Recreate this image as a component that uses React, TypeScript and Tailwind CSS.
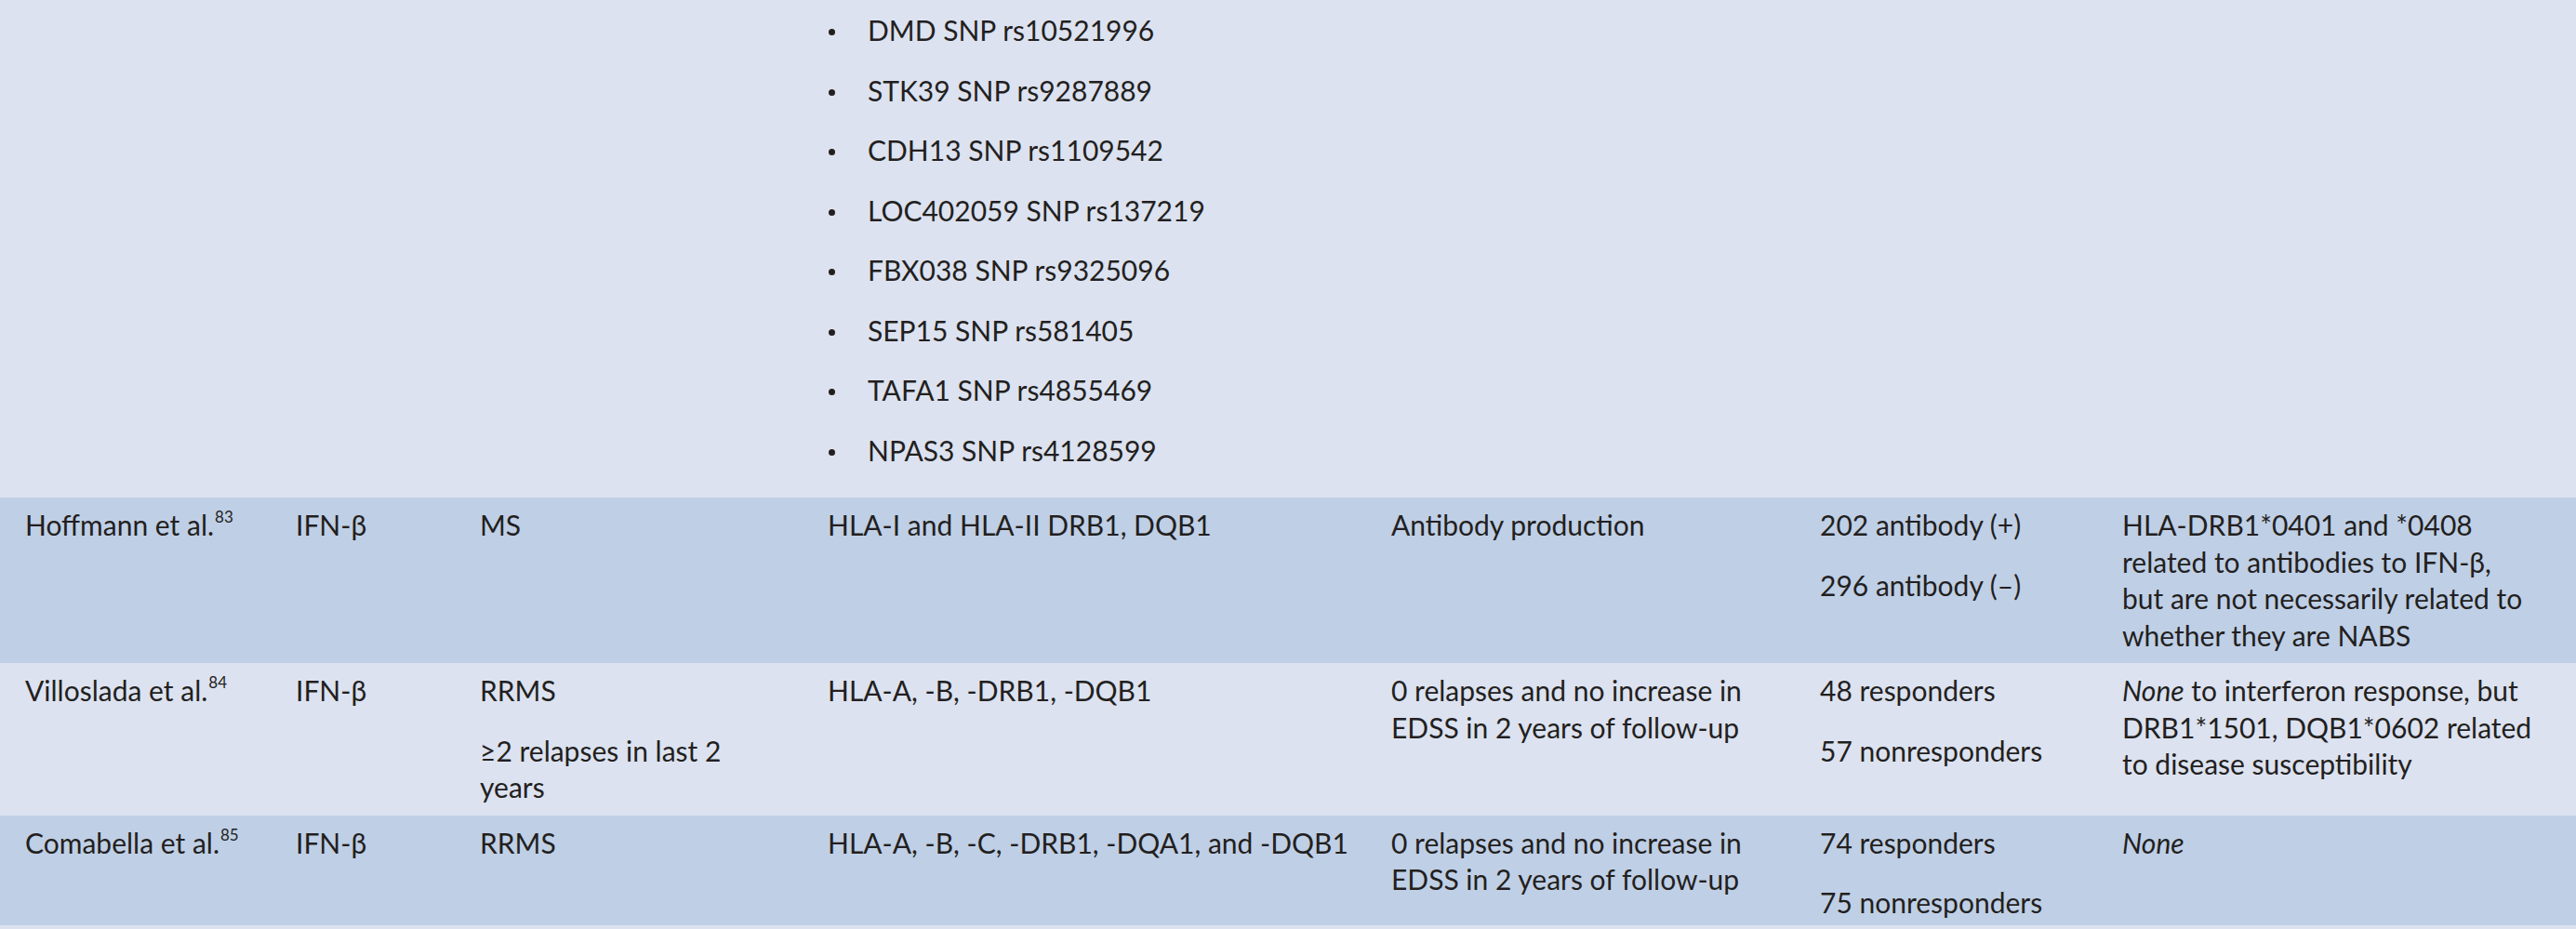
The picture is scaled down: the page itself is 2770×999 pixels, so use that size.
import React from 'react'

type Cell = React.ReactNode

const snps = [
  'DMD SNP rs10521996',
  'STK39 SNP rs9287889',
  'CDH13 SNP rs1109542',
  'LOC402059 SNP rs137219',
  'FBX038 SNP rs9325096',
  'SEP15 SNP rs581405',
  'TAFA1 SNP rs4855469',
  'NPAS3 SNP rs4128599',
]

const Ref = ({ name, n }: { name: string; n: string }) => (
  <span>
    {name}
    <sup className="relative -top-[3px] ml-[1px] text-[17px] align-super leading-none">{n}</sup>
  </span>
)

const Paras = ({ items }: { items: Cell[] }) => (
  <div className="flex flex-col gap-[25px]">
    {items.map((item, i) => (
      <p key={i}>{item}</p>
    ))}
  </div>
)

// explicit line breaks, as set in the printed table
const Lines = ({ lines }: { lines: Cell[] }) => (
  <div className="whitespace-nowrap">
    {lines.map((line, i) => (
      <div key={i}>{line}</div>
    ))}
  </div>
)

const Row = ({ cells, dark, last }: { cells: Cell[]; dark?: boolean; last?: boolean }) => (
  <div
    className={`grid grid-cols-[291px_198px_374px_606px_461px_325px_515px] ${
      dark ? 'bg-[#bfcfe6]' : 'bg-[#dce2f0]'
    }`}
  >
    {cells.map((cell, i) => (
      <div key={i} className={`pl-[27px] pr-[20px] pt-[10px] ${last ? 'pb-[4px]' : 'pb-[10px]'}`}>
        {cell}
      </div>
    ))}
  </div>
)

export default function App() {
  return (
    <div className="w-[2770px] h-[999px] overflow-hidden bg-[#dce2f0] font-['Lato',sans-serif] text-[30px] leading-[39.5px] text-[#231f20]">
      {/* tail of the previous row: the SNP list */}
      <div className="grid grid-cols-[291px_198px_374px_606px_461px_325px_515px] bg-[#dce2f0]">
        <div />
        <div />
        <div />
        <div className="pl-[27px] pt-[13px] pb-[31px]">
          <ul className="flex flex-col gap-[25px]">
            {snps.map((s) => (
              <li key={s} className="flex">
                <span className="w-[43px] shrink-0 flex">
                  <span className="ml-[1px] mt-[18px] w-[7px] h-[7px] rounded-full bg-[#231f20]" />
                </span>
                <span>{s}</span>
              </li>
            ))}
          </ul>
        </div>
        <div />
        <div />
        <div />
      </div>

      <Row
        dark
        cells={[
          <Ref name="Hoffmann et al." n="83" />,
          'IFN-β',
          'MS',
          'HLA-I and HLA-II DRB1, DQB1',
          'Antibody production',
          <Paras items={['202 antibody (+)', '296 antibody (–)']} />,
          <Lines
            lines={[
              'HLA-DRB1*0401 and *0408',
              'related to antibodies to IFN-β,',
              'but are not necessarily related to',
              'whether they are NABS',
            ]}
          />,
        ]}
      />

      <Row
        cells={[
          <Ref name="Villoslada et al." n="84" />,
          'IFN-β',
          <Paras items={['RRMS', <Lines lines={['≥2 relapses in last 2', 'years']} />]} />,
          'HLA-A, -B, -DRB1, -DQB1',
          <Lines lines={['0 relapses and no increase in', 'EDSS in 2 years of follow-up']} />,
          <Paras items={['48 responders', '57 nonresponders']} />,
          <Lines
            lines={[
              <>
                <em>None</em> to interferon response, but
              </>,
              'DRB1*1501, DQB1*0602 related',
              'to disease susceptibility',
            ]}
          />,
        ]}
      />

      <Row
        dark
        last
        cells={[
          <Ref name="Comabella et al." n="85" />,
          'IFN-β',
          'RRMS',
          <span className="whitespace-nowrap">HLA-A, -B, -C, -DRB1, -DQA1, and -DQB1</span>,
          <Lines lines={['0 relapses and no increase in', 'EDSS in 2 years of follow-up']} />,
          <Paras items={['74 responders', '75 nonresponders']} />,
          <em>None</em>,
        ]}
      />
    </div>
  )
}
